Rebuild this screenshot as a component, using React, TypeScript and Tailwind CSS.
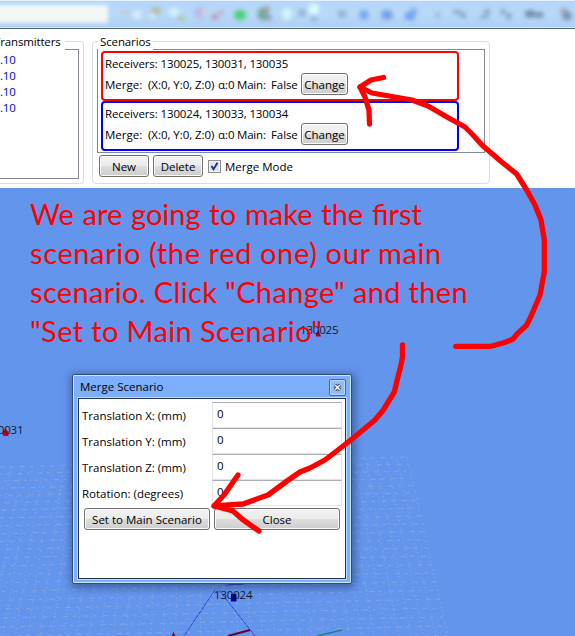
import type { ReactNode } from "react";

const ui = "font-['Open_Sans','Noto_Sans',sans-serif] text-[11.5px] text-black";

function Button({ className = "", children }: { className?: string; children: ReactNode }) {
  return (
    <button
      className={`flex h-[22px] shrink-0 items-center justify-center whitespace-nowrap rounded-[3px] border border-[#707070] bg-[linear-gradient(#f3f3f3,#ebebeb_50%,#dddddd_50%,#cdcdcd)] shadow-[inset_0_0_0_1px_#fafafa] ${className}`}
    >
      {children}
    </button>
  );
}

type Blob = [number, number, number, number, string];
const toolbarIcons: Blob[] = [
  [126, 13, 7, 4, "#c7c8bd"], [137, 15, 8, 8, "#d9ecff"], [156, 11, 9, 7, "#b8ba9c"], [153, 16, 5, 5, "#d7edff"],
  [174, 12, 9, 8, "#d5efff"], [181, 18, 6, 5, "#b4c3a0"], [200, 13, 10, 10, "#b9b5e7"], [203, 13, 4, 4, "#f1d5e6"],
  [215, 17, 6, 5, "#bd8fae"], [221, 13, 6, 4, "#c9abc9"], [240, 15, 11, 9, "#48cf75"], [263, 14, 10, 12, "#74a99e"],
  [267, 9, 5, 5, "#ad9c9e"], [269, 18, 5, 5, "#a28fbd"], [287, 14, 9, 11, "#d5f3ff"], [302, 13, 6, 6, "#8caac9"],
  [314, 9, 10, 11, "#d8faff"], [314, 19, 5, 4, "#86aac7"], [342, 14, 8, 7, "#91b0d3"], [364, 15, 9, 9, "#7ba8ef"],
  [387, 15, 11, 9, "#779fe7"], [410, 16, 10, 8, "#73a4ef"], [414, 11, 6, 6, "#82acef"], [438, 15, 6, 6, "#a0bedf"],
  [457, 12, 8, 4, "#8ba8c4"], [463, 15, 6, 6, "#8eabc9"], [484, 17, 9, 4, "#92b3d2"], [487, 12, 5, 6, "#89a8c6"],
  [503, 12, 5, 6, "#8facc9"], [509, 16, 5, 6, "#86a5c3"], [530, 14, 10, 7, "#728eab"], [539, 15, 9, 5, "#738fab"],
  [564, 11, 8, 6, "#afa9c4"], [567, 16, 9, 8, "#7d94b1"],
];

function Toolbar() {
  return (
    <header className="h-[29px] shrink-0 border-b border-[#53647d] bg-[#b4d5f7]">
      <svg width="575" height="28" className="block">
        <defs>
          <linearGradient id="bar" x2="0" y2="1">
            <stop stopColor="#b4d5fb" />
            <stop offset="0.5" stopColor="#b8d9f7" />
            <stop offset="1" stopColor="#adcff6" />
          </linearGradient>
          <filter id="soft" x="-20%" y="-100%" width="140%" height="300%" colorInterpolationFilters="sRGB"><feGaussianBlur stdDeviation="2.1" /></filter>
        </defs>
        <rect width="575" height="28" fill="url(#bar)" />
        <rect x="-8" y="5" width="116" height="18" fill="#f3f7f5" filter="url(#soft)" />
        <g filter="url(#soft)">
          {toolbarIcons.map(([x, y, w, h, color], i) => (
            <ellipse key={i} cx={x} cy={y} rx={w * 0.56} ry={h * 0.56} fill={color} />
          ))}
        </g>
        <rect width="575" height="1" fill="#e5f1fd" />
        <rect y="27" width="575" height="1" fill="#d5e8fa" />
      </svg>
    </header>
  );
}

function Scenario({ color, receivers }: { color: string; receivers: string }) {
  return (
    <div className={`h-[50px] w-[358px] rounded-[4px] border-2 pl-[2px] ${color}`}>
      <div className="flex h-[20px] items-center whitespace-nowrap pt-px tracking-[-0.12px]">Receivers: {receivers}</div>
      <div className="flex h-[22px] items-center whitespace-nowrap">
        <span className="w-[43px] pt-px">Merge:</span>
        <span className="w-[70px] pt-px tracking-[-0.05px]">(X:0, Y:0, Z:0)</span>
        <span className="w-[19px] pt-px">α:0</span>
        <span className="w-[34px] pt-px tracking-[-0.2px]">Main:</span>
        <span className="w-[30px] pt-px tracking-[-0.1px]">False</span>
        <Button className="w-[47px] pt-px">Change</Button>
      </div>
    </div>
  );
}

function Panels() {
  return (
    <section className="flex h-[159px] shrink-0 bg-white pt-[12px]">
      <fieldset className="relative h-[143px] w-[84px] rounded-r-[4px] border border-l-0 border-[#d5dfe5] pt-[7px] pr-[4px]">
        <span className="absolute -top-[8px] left-[-6px] bg-white pr-[4px] leading-[16px] tracking-[-0.15px]">Transmitters</span>
        <ul className="h-[130px] border border-l-0 border-[#828790] pt-[2px] leading-[16px] tracking-[-0.2px] text-[#0000f0]">
          <li>.10</li>
          <li>.10</li>
          <li>.10</li>
          <li>.10</li>
        </ul>
      </fieldset>
      <fieldset className="relative ml-[8px] h-[143px] w-[398px] rounded-[4px] border border-[#d5dfe5] pt-[7px] pl-[4px]">
        <span className="absolute -top-[8px] left-[5px] bg-white px-[2px] leading-[16px] tracking-[-0.12px]">Scenarios</span>
        <div className="h-[104px] w-[388px] border border-[#828790] pt-px pl-[3px]">
          <Scenario color="border-[#ff0000]" receivers="130025, 130031, 130035" />
          <Scenario color="border-[#0000ff]" receivers="130024, 130033, 130034" />
        </div>
        <div className="flex items-center pt-[2px] pl-[2px]">
          <Button className="w-[50px] pt-px">New</Button>
          <Button className="ml-[4px] w-[50px] pt-px">Delete</Button>
          <span className="ml-[5px] flex size-[13px] items-center justify-center border border-[#8e8f8f] bg-[#dfe4e9] shadow-[inset_0_0_0_1px_#f4f4f4]">
            <svg width="9" height="9" viewBox="0 0 9 9" fill="none" stroke="#243478" strokeWidth="1.9">
              <path d="M1.500 4 3.500 7.200 7.500 .8" />
            </svg>
          </span>
          <span className="ml-[4px] pt-px">Merge Mode</span>
        </div>
      </fieldset>
    </section>
  );
}

const columns = Array.from({ length: 39 }, (_, i) => 407 - i * 10.4);
const rows = Array.from({ length: 24 }, (_, i) => i * 6.9 + i * i * 0.055);

function Scene() {
  return (
    <svg className="absolute inset-0" width="575" height="448" viewBox="0 188 575 448" fill="none">
      <g stroke="#a9b8d6" strokeOpacity="0.6" strokeWidth="0.8">
        {columns.map((x, i) => (
          <line key={i} x1={x} y1={457 + (407 - x) * 0.025} x2={190 + (x - 190) * 1.19} y2="637" strokeDasharray={i % 2 ? "1.5 3" : "2 2.5 1 3"} strokeDashoffset={i * 2} />
        ))}
        {rows.map((y, i) => (
          <line key={i} x1="0" y1={467 + y} x2={407 + y * 0.225} y2={457 + y} strokeDasharray="5 5 3 7" strokeDashoffset={i * 3} />
        ))}
      </g>
      <path d="M215 590 184 636M219 590 255 636" stroke="#2634c4" strokeWidth="0.9" strokeDasharray="4 1" />
      <path d="M223 585.5 246 580H266L241 585Z" fill="#283cc0" />
      <path d="M228 636 250 630" stroke="#650032" strokeWidth="2" />
      <path d="M317 636 342 630" stroke="#20807b" strokeWidth="1.3" />
      <path d="M171.500 636 173.500 632 175.500 636Z" fill="#970034" />
      <path d="M231 594h5.500v7.500h-5.500Z" fill="#0000a8" />
      <path d="M316 334 318.500 330 321 336.500H316Z" fill="#a70010" />
      <path d="M3 431.500 5 429 8.500 431.500V436H3Z" fill="#d00012" />
    </svg>
  );
}

function Field({ label }: { label: string }) {
  return (
    <label className="flex h-[26px] items-center">
      <span className="w-[133px] shrink-0 pl-[3px] pt-[2px]">{label}</span>
      <span className="h-[26px] w-[130px] border border-[#e2e3ea] border-t-[#abadb3] bg-white pl-[4px] leading-[22px]">0</span>
    </label>
  );
}

function MergeDialog() {
  return (
    <div className="absolute left-[72px] top-[186px] h-[210px] w-[280px] rounded-[2px] border border-[#304e7b] bg-[#7eaffd] px-[4px] pb-[4px] shadow-[inset_0_0_0_1px_#cae5ff,1px_2px_8px_2px_#26416f99]">
      <div className="flex h-[22px] items-center justify-between pl-[3px] pr-px pt-[2px]">
        <span>Merge Scenario</span>
        <span className="flex size-[17px] items-center justify-center rounded-[2px] border border-[#496894] bg-[#91bdfd] shadow-[inset_0_0_0_1px_#b9d9ff]">
          <svg width="9" height="9" viewBox="0 0 9 9">
            <path d="M2 2 7 7M7 2 2 7" stroke="#454b59" strokeWidth="3.4" />
            <path d="M2.200 2.200 6.800 6.800M6.800 2.200 2.200 6.800" stroke="#fff" strokeWidth="1.5" />
          </svg>
        </span>
      </div>
      <div className="border border-[#b9dcff]">
        <div className="h-[181px] border border-[#243450] bg-white pt-[3px]">
          <Field label="Translation X: (mm)" />
          <Field label="Translation Y: (mm)" />
          <Field label="Translation Z: (mm)" />
          <Field label="Rotation: (degrees)" />
          <div className="flex gap-[4px] pt-[2px] pl-[5px]">
            <Button className="w-[126px] pt-px">Set to Main Scenario</Button>
            <Button className="w-[126px] pt-px">Close</Button>
          </div>
        </div>
      </div>
    </div>
  );
}

function Arrows() {
  return (
    <svg className="pointer-events-none absolute inset-0" width="575" height="636" fill="none" stroke="#ff0000" strokeWidth="5.3" strokeLinecap="round" strokeLinejoin="round">
      <path d="M455.700 346.300H491L503 343 512.700 339.300 517 334 526.700 325 532 314 540 295 544.300 272V240L541 220 535 205 526.700 190 516.700 174 501.700 162 482 145 473 135 465 127 447 117 428 106 412 100 392 96.500 372 93 360 87" />
      <path d="M383.500 77.500 371 80 360 87 365 97 369 110 369.500 124" />
      <path d="M402.500 345V357L401 365 397.700 378 394.300 392 383.300 410 375 420 361.700 431 347 443 325 460 310 468 300 472 287 481 268 495 243 504 214 506" />
      <path d="M238 475 224 495 214 506 233 511 242 519 259 531" />
    </svg>
  );
}

export default function App() {
  return (
    <div className={`relative flex h-[636px] w-[575px] flex-col overflow-hidden bg-white ${ui}`}>
      <Toolbar />
      <Panels />
      <main className="relative flex-1 bg-[#6495ed]">
        <Scene />
        <span className="absolute left-[300px] top-[134px] leading-[16px] tracking-[-0.2px] text-[#10182a]">130025</span>
        <span className="absolute left-[-15px] top-[234px] leading-[16px] tracking-[-0.2px] text-[#10182a]">130031</span>
        <span className="absolute left-[214px] top-[399px] leading-[16px] tracking-[-0.2px] text-[#10182a]">130024</span>
        <p className="relative whitespace-nowrap pl-[30px] pt-[6px] font-['Lato',sans-serif] text-[29px] leading-[39px] text-[#ff0000]">
          <span className="block [word-spacing:1.4px]">We are going to make the first</span>
          <span className="block tracking-[0.62px]">scenario (the red one) our main</span>
          <span className="block tracking-[0.35px]">scenario. Click "Change" and then</span>
          <span className="block tracking-[0.37px]">"Set to Main Scenario"</span>
        </p>
        <MergeDialog />
      </main>
      <Arrows />
    </div>
  );
}
